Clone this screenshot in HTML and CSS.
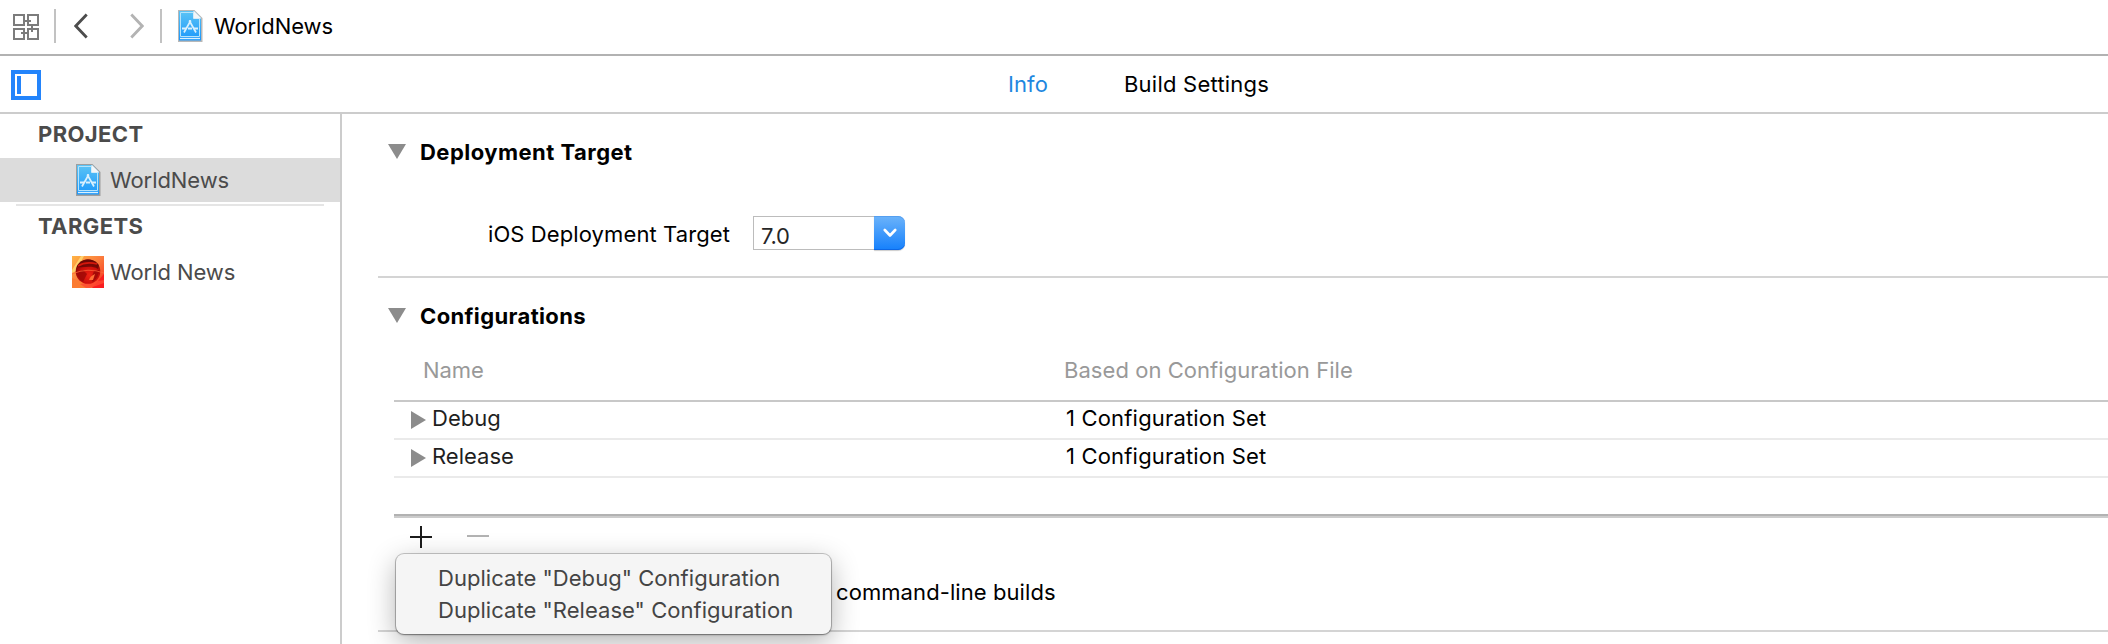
FILE: index.html
```
<!DOCTYPE html>
<html lang="en">
<head>
<meta charset="utf-8">
<title>WorldNews</title>
<link rel="stylesheet" href="styles.css">
</head>
<body>
<svg class="defs" width="0" height="0" aria-hidden="true">
  <defs>
    <linearGradient id="doc-blue" x1="0" y1="0" x2="0" y2="1">
      <stop offset="0" stop-color="#5cc4f5"/><stop offset="1" stop-color="#1b97fb"/>
    </linearGradient>
    <symbol id="project-file" viewBox="0 0 26 34">
      <path d="M2 2H17L24.500 9.500V32H2Z" fill="none" stroke="#000" stroke-opacity=".28" stroke-width="2"/>
      <path d="M2 2H17L24 9V31.500H2Z" fill="url(#doc-blue)"/>
      <path d="M3.500 3.500H16.500V9.500H22.500V27.500H3.500Z" fill="none" stroke="#b5e3fb" stroke-width="1"/>
      <path d="M3 29.500H23" stroke="#d9f0fe" stroke-width="1.300"/>
      <path d="M16.500 2H17L24 9V9.500H16.500Z" fill="#f3f6f8"/>
      <path d="M13.800 11.500L7 23.500M12.200 11.500L19 23.500" stroke="#d9f0fe" stroke-width="1.700" fill="none"/>
      <path d="M5 19.500H9M11 19.500H15M17 19.500H21" stroke="#d9f0fe" stroke-width="1.800" fill="none"/>
    </symbol>
  </defs>
</svg>
<div class="window">
  <header class="jumpbar">
    <svg class="related" width="26" height="26" viewBox="0 0 26 26" fill="none" stroke="#7c7c7c" stroke-width="2">
      <path d="M1 1H11V11H1ZM15 1H25V11H15ZM1 15H11V25H1ZM15 15H25V25H15Z"/>
      <path d="M11 7H18M8 19H15M19 11V18"/>
    </svg>
    <span class="divider"></span>
    <svg class="back" width="14" height="26" viewBox="0 0 14 26" fill="none" stroke="#4d4d4d" stroke-width="2.800"><path d="M12.700 1.500L1.800 13L12.700 24.500"/></svg>
    <svg class="forward" width="14" height="26" viewBox="0 0 14 26" fill="none" stroke="#b3b3b3" stroke-width="2.800"><path d="M1.300 1.500L12.200 13L1.300 24.500"/></svg>
    <span class="divider"></span>
    <svg class="file-icon" width="26" height="34"><use href="#project-file"/></svg>
    <span class="crumb">WorldNews</span>
  </header>

  <nav class="tabbar">
    <span class="toggle"><span class="toggle-pane"></span></span>
    <span class="tab tab-active">Info</span>
    <span class="tab tab-build">Build Settings</span>
  </nav>

  <div class="body">
    <aside class="sidebar">
      <h2 class="group">PROJECT</h2>
      <div class="item item-selected">
        <svg class="item-icon" width="26" height="34"><use href="#project-file"/></svg>
        <span class="item-name">WorldNews</span>
      </div>
      <hr class="rule">
      <h2 class="group">TARGETS</h2>
      <div class="item">
        <svg class="item-icon app-icon" width="32" height="32" viewBox="0 0 32 32">
          <defs>
            <linearGradient id="sky" x1="0" y1="0" x2="1" y2="1">
              <stop offset="0" stop-color="#ffb545"/><stop offset=".5" stop-color="#fb7a3c"/><stop offset="1" stop-color="#f5261c"/>
            </linearGradient>
            <radialGradient id="globe" cx=".55" cy=".65" r=".65">
              <stop offset="0" stop-color="#ef2415"/><stop offset=".6" stop-color="#c90d09"/><stop offset="1" stop-color="#7d0605"/>
            </radialGradient>
          </defs>
          <rect width="32" height="32" fill="url(#sky)"/>
          <path d="M9 0H12L4 15L0 17V14Z" fill="#ffe27a" opacity=".75"/>
          <path d="M0 22L12 27L22 32H0Z" fill="#fb7b32"/>
          <path d="M20 32L32 18V32Z" fill="#fa1d20"/>
          <path d="M8 28L32 24V27L18 32H14Z" fill="#ff4a31" opacity=".8"/>
          <circle cx="16" cy="15.500" r="12.300" fill="url(#globe)"/>
          <path d="M5 10C10 2 22 2 27 9L26 13C20 9 12 12 5 11Z" fill="#5e0706" opacity=".75"/>
          <path d="M6 10Q14 5 25 8" stroke="#d5170c" stroke-width="1.500" fill="none"/>
          <path d="M5 17L11 14L15 18L11 26Q6 23 5 17ZM22 15L27 14Q27 21 21 26L19 23Z" fill="#9b0906" opacity=".8"/>
          <path d="M17 24Q18 20 23 18L21 24Z" fill="#ff7137"/>
          <path d="M0 18Q16 11 32 17" stroke="#ff6a3c" stroke-width="1" fill="none" opacity=".7"/>
        </svg>
        <span class="item-name">World News</span>
      </div>
    </aside>

    <main class="editor">
      <section class="section deployment">
        <h3 class="title"><svg class="tri-down" width="18" height="15" viewBox="0 0 18 15"><path d="M0 0H18L9 15Z"/></svg><span class="title-deployment">Deployment Target</span></h3>
        <div class="field">
          <label class="label">iOS Deployment Target</label>
          <div class="combo">
            <span class="combo-value">7.0</span>
            <span class="combo-button"><svg width="14" height="10" viewBox="0 0 14 10" fill="none" stroke="#fff" stroke-width="2.600" stroke-linecap="round" stroke-linejoin="round"><path d="M1.800 2L7 7.500L12.200 2"/></svg></span>
          </div>
        </div>
      </section>

      <section class="section configurations">
        <h3 class="title"><svg class="tri-down" width="18" height="15" viewBox="0 0 18 15"><path d="M0 0H18L9 15Z"/></svg><span class="title-config">Configurations</span></h3>
        <div class="table">
          <div class="thead"><span class="head-name">Name</span><span class="head-file">Based on Configuration File</span></div>
          <div class="trow"><svg class="tri-right" width="15" height="18" viewBox="0 0 15 18"><path d="M0 0L15 9L0 18Z"/></svg><span class="cell-name">Debug</span><span class="cell-set">1 Configuration Set</span></div>
          <div class="trow"><svg class="tri-right" width="15" height="18" viewBox="0 0 15 18"><path d="M0 0L15 9L0 18Z"/></svg><span class="cell-name">Release</span><span class="cell-set">1 Configuration Set</span></div>
        </div>
        <div class="actions">
          <svg width="22" height="22" viewBox="0 0 22 22" stroke="#1c1c1c" stroke-width="2"><path d="M11 0V22M0 11H22"/></svg>
          <svg width="22" height="22" viewBox="0 0 22 22" stroke="#b3b3b3" stroke-width="2"><path d="M0 10H22"/></svg>
          <div class="menu">
            <div class="menu-item">Duplicate "Debug" Configuration</div>
            <div class="menu-item">Duplicate "Release" Configuration</div>
          </div>
        </div>
        <p class="note">command-line builds</p>
      </section>
    </main>
  </div>
</div>
</body>
</html>
```
FILE: styles.css
```
* { box-sizing: border-box; }
body {
  margin: 0;
  background: #fff;
  color: #000;
  font: 22px/26px Inter, "Open Sans", sans-serif;
  overflow: hidden;
}
svg { display: block; flex: none; }
h2, h3, p { margin: 0; font-size: inherit; }
span, label { white-space: nowrap; }
.defs { position: absolute; }
.window { height: 644px; display: flex; flex-direction: column; overflow: hidden; }

/* Jump bar */
.jumpbar { flex: none; display: flex; align-items: center; height: 56px; padding: 0 0 2px 13px; border-bottom: 2px solid #b2b2b2; }
.related { margin-top: 2px; }
.divider { width: 2px; height: 34px; background: #c2c2c2; margin-left: 15px; }
.back { margin-left: 18px; }
.forward { margin-left: 42px; }
.forward + .divider { margin-left: 16px; }
.file-icon { margin-left: 15px; }
.crumb { margin-left: 11px; letter-spacing: -.09px; }

/* Tabs */
.tabbar { flex: none; display: flex; align-items: center; height: 58px; padding-left: 11px; border-bottom: 2px solid #ccc; }
.toggle { width: 30px; height: 30px; margin-top: 2px; border: 4px solid #2384fb; padding: 2px; }
.toggle-pane { display: block; width: 4px; height: 18px; background: #2384fb; }
.tab-active { margin-left: 967px; width: 116px; color: #1e87df; letter-spacing: .1px; }
.tab-build { letter-spacing: .23px; }

.body { flex: 1; display: flex; min-height: 0; }

/* Sidebar */
.sidebar { width: 342px; flex: none; border-right: 2px solid #ccc; color: #4b4b4b; }
.group { height: 44px; padding: 7px 0 0 38px; font-weight: 700; letter-spacing: .38px; }
.item { display: flex; align-items: center; height: 44px; }
.item-selected { background: #dcdcdc; }
.item-icon { width: 26px; margin: 0 9px 0 75px; }
.app-icon { width: 32px; margin: 0 6px 0 72px; }
.item-name { letter-spacing: -.07px; }
.item-selected + .rule { height: 2px; margin: 2px 16px 0; border: 0; background: #e5e5e5; }

/* Editor */
.editor { flex: 1; min-width: 0; padding-left: 36px; }
.section { border-bottom: 2px solid #d4d4d4; padding-top: 25px; }
.deployment { height: 164px; }
.configurations { height: 354px; }
.title { display: flex; height: 26px; padding-left: 10px; font-weight: 700; }
.tri-down { margin: 5px 14px 0 0; fill: #8c8c8c; }
.title-deployment { letter-spacing: .47px; }
.title-config { letter-spacing: .36px; }
.field { display: flex; align-items: center; margin: 51px 0 0 110px; }
.label { width: 265px; padding-top: 2px; letter-spacing: .1px; }
.combo { display: flex; width: 152px; height: 34px; }
.combo-value { flex: 1; padding: 7px 0 0 7px; line-height: 24px; border: 1px solid #bcbcbc; border-right: 0; color: #262626; letter-spacing: -.3px; }
.combo-button { display: flex; align-items: center; justify-content: center; width: 31px; border-radius: 0 7px 7px 0; background: linear-gradient(#6cb3fa, #1580fc); box-shadow: inset 0 1px #559ff0, inset 0 -1px #0d68e6, 0 1px 1px rgba(0, 0, 0, .2); }

/* Configurations table */
.table { margin: 28px 0 0 16px; }
.thead { display: flex; height: 45px; padding-left: 29px; border-bottom: 2px solid #c8c8c8; color: #999; }
.head-name { width: 641px; letter-spacing: -.1px; }
.head-file { letter-spacing: .05px; }
.trow { display: flex; height: 38px; padding: 3px 0 0 17px; border-bottom: 2px solid #eaeaea; }
.tri-right { margin: 6px 6px 0 0; fill: #8c8c8c; }
.cell-name { width: 634px; color: #1f1f1f; }
.cell-set { letter-spacing: .18px; }
.actions { position: relative; display: flex; gap: 35px; height: 65px; margin: 36px 0 0 16px; padding: 10px 0 0 16px; border-top: 2px solid #b2b2b2; box-shadow: inset 0 2px #ccc; }
.note { padding-left: 458px; letter-spacing: .08px; }

/* Popup menu over the table footer */
.menu { position: absolute; z-index: 1; left: 2px; top: 38px; width: 435px; height: 80px; padding: 7px 0 0 42px; border-radius: 8px; background: #f5f5f5; color: #444; box-shadow: 0 0 0 1px rgba(0, 0, 0, .2), 0 1px 2px rgba(0, 0, 0, .35), 0 8px 28px rgba(0, 0, 0, .3); }
.menu-item { height: 32px; line-height: 34px; white-space: nowrap; letter-spacing: .04px; }
```
